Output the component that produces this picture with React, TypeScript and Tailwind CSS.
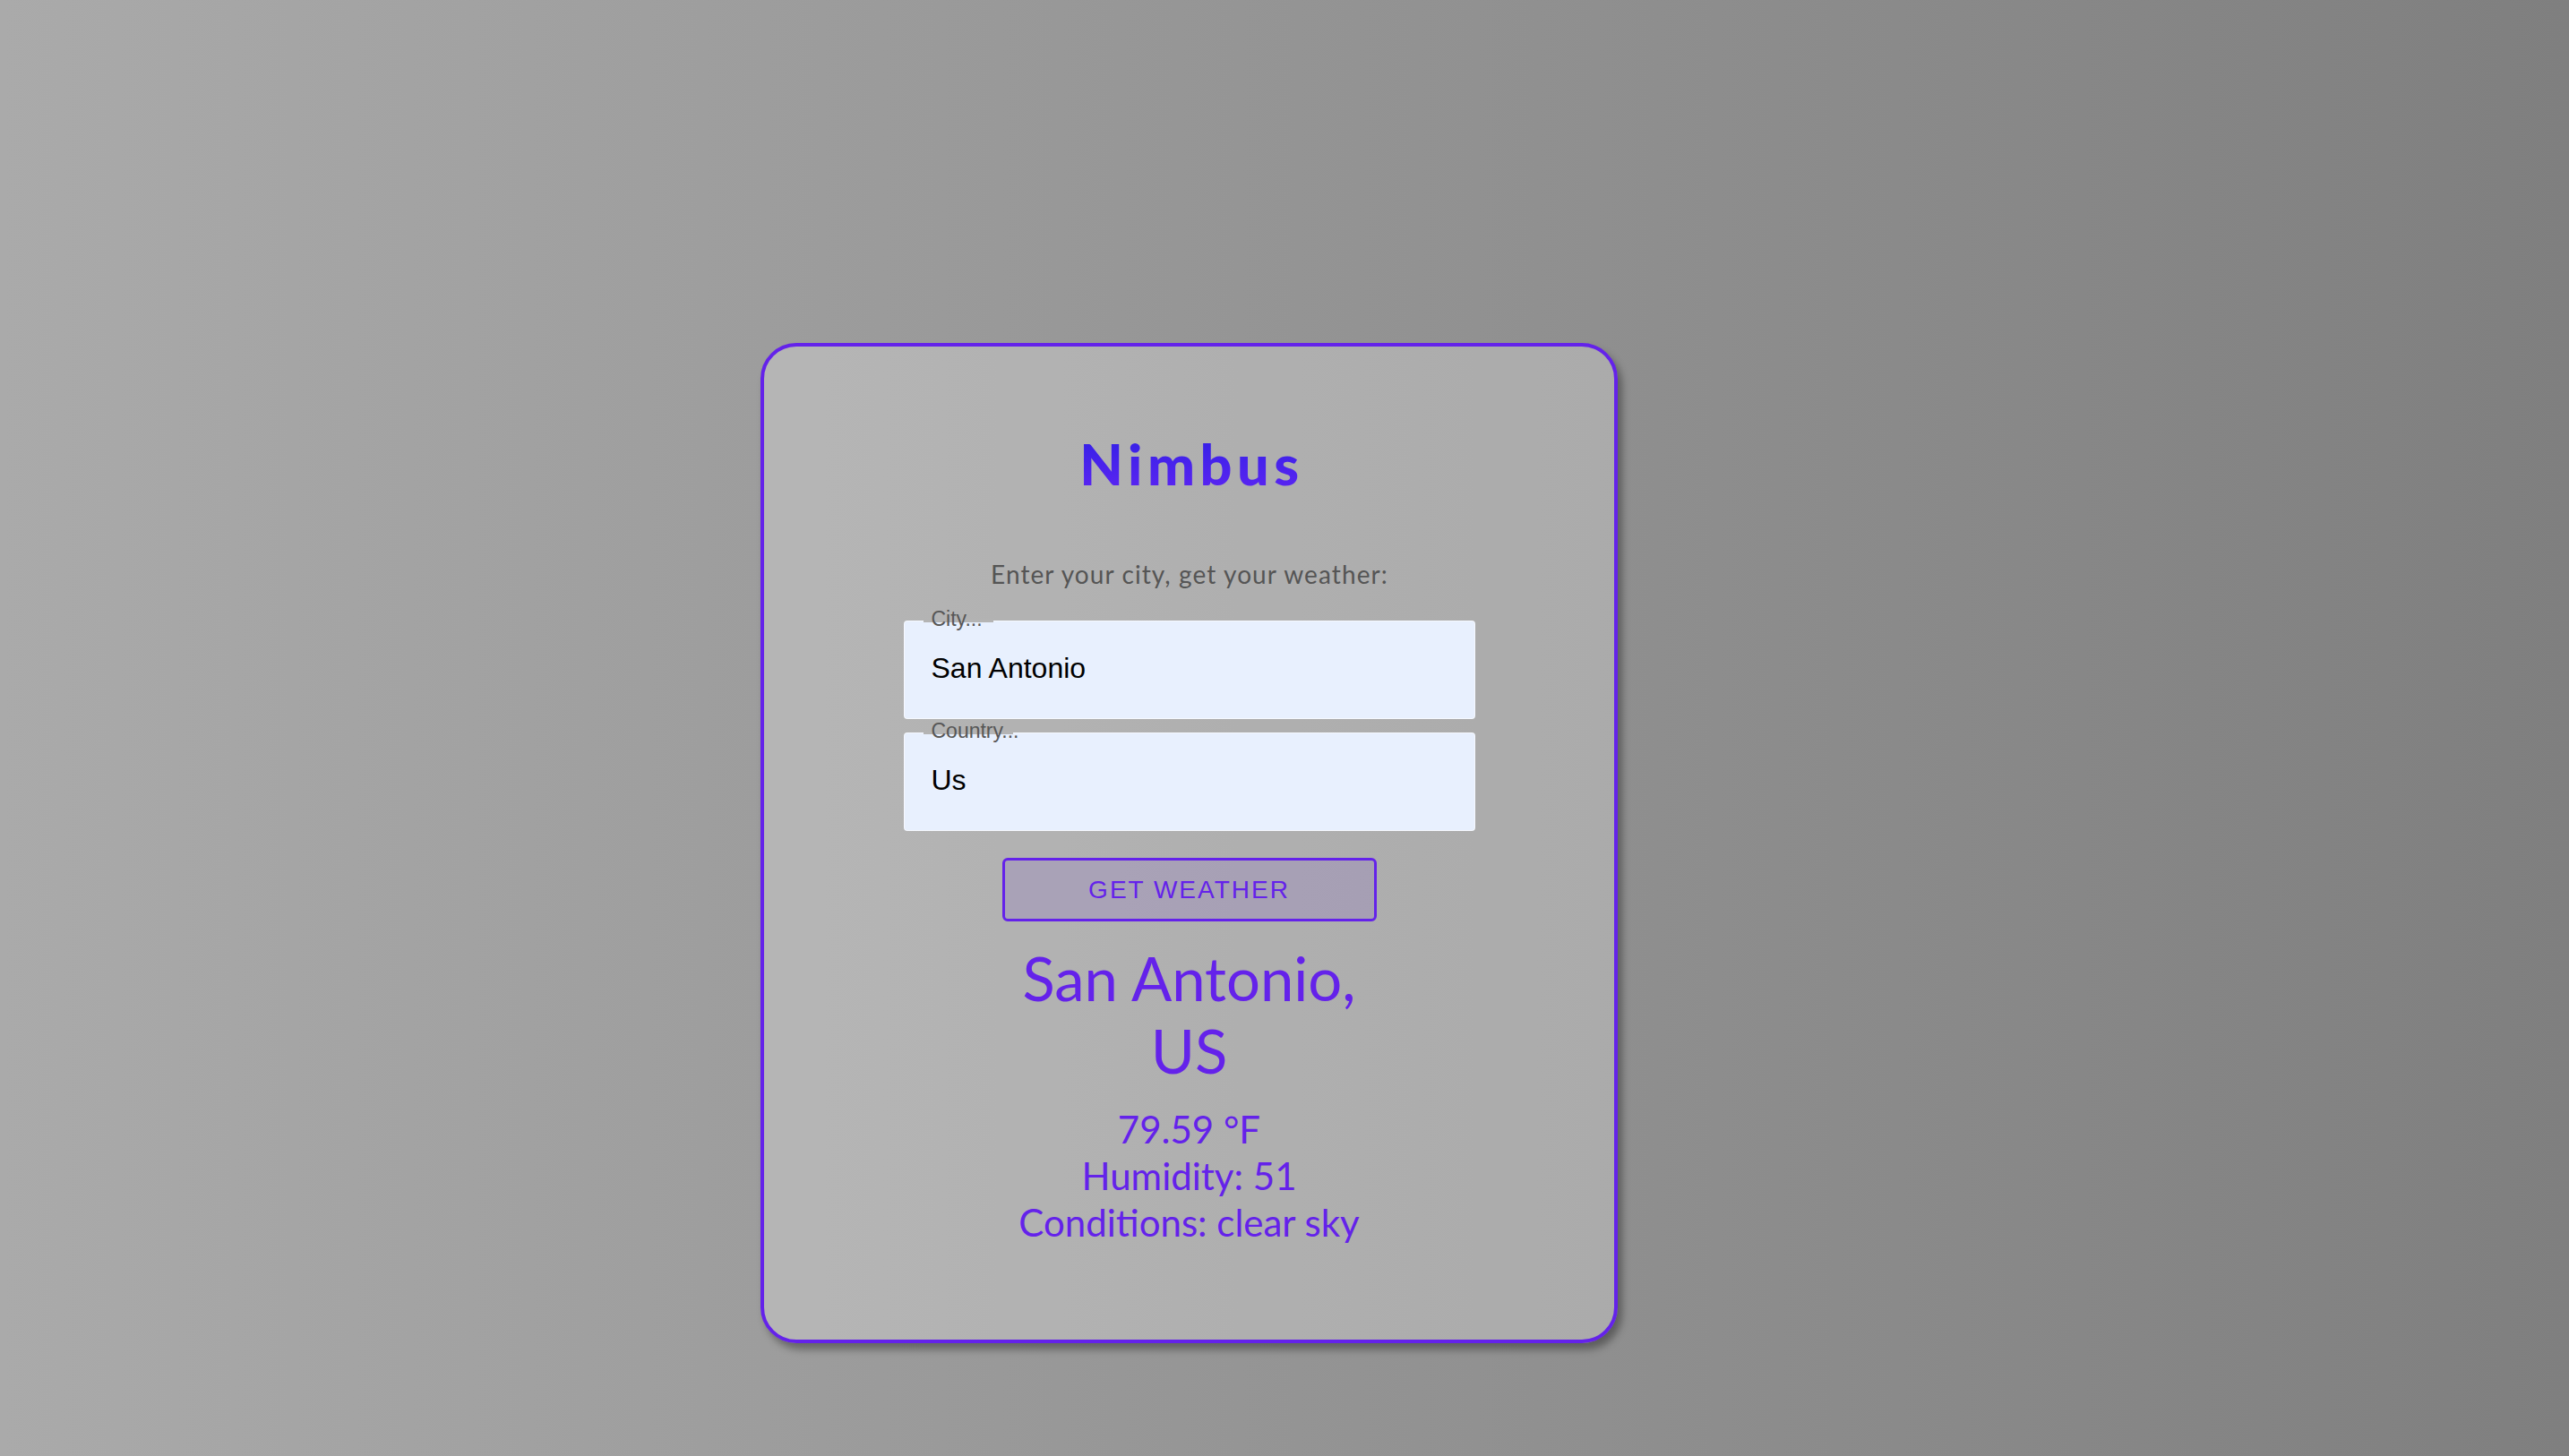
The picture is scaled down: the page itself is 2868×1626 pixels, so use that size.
const results = {
  place: "San Antonio, US",
  temp: "79.59 °F",
  humidity: 51,
  conditions: "clear sky",
};

function Field({ label, value, notch }: { label: string; value: string; notch: string }) {
  return (
    <div className="relative h-[110px] w-[638px] rounded-[4px] border border-white/60 bg-[#e8f0fe]">
      <div className={`absolute left-[21px] top-[-2px] h-[3px] bg-[#b4b4b4] ${notch}`} />
      <span className="absolute left-[30px] top-[-14px] font-['Liberation_Sans',Arial,sans-serif] text-[23px] leading-[23px] text-[#575757]">
        {label}
      </span>
      <input
        readOnly
        defaultValue={value}
        className="h-full w-full bg-transparent pb-[4px] pl-[30px] font-['Liberation_Sans',Arial,sans-serif] text-[32px] text-black outline-none"
      />
    </div>
  );
}

export default function App() {
  return (
    <div className="min-h-[1626px] w-full bg-gradient-to-r from-[#aaaaaa] to-[#7f7f7f] pt-[383px] pl-[849px]">
      <div className="flex h-[1117px] w-[957px] flex-col items-center rounded-[40px] border-4 border-[#6422ea] bg-white/25 pt-[100px] font-['Lato',sans-serif] shadow-[5px_7px_9px_rgba(0,0,0,0.35)]">
        <h1 className="bg-gradient-to-b from-[#3320e6] to-[#5b24f2] bg-clip-text pl-[6px] text-[63px] font-black leading-[62px] tracking-[5.5px] text-transparent">
          Nimbus
        </h1>
        <p className="mt-[78px] pl-[1px] text-[28px] leading-[28px] tracking-[1.1px] text-[#555555]">
          Enter your city, get your weather:
        </p>
        <div className="mt-[38px] flex flex-col gap-[15px]">
          <Field label="City..." value="San Antonio" notch="w-[78px]" />
          <Field label="Country..." value="Us" notch="w-[100px]" />
        </div>
        <button className="mt-[30px] h-[71px] w-[418px] rounded-[6px] border-[3px] border-[#6422ea] bg-[#6422ea]/10 font-['Liberation_Sans',Arial,sans-serif] text-[28px] uppercase tracking-[2px] text-[#6422ea]">
          Get Weather
        </button>
        <div className="mt-[23px] w-[418px] text-center text-[#6422ea]">
          <h2 className="text-[67px] leading-[81px]">{results.place}</h2>
          <div className="mt-[21px] text-[42px] leading-[52px]">
            <p>{results.temp}</p>
            <p>Humidity: {results.humidity}</p>
            <p>Conditions: {results.conditions}</p>
          </div>
        </div>
      </div>
    </div>
  );
}
